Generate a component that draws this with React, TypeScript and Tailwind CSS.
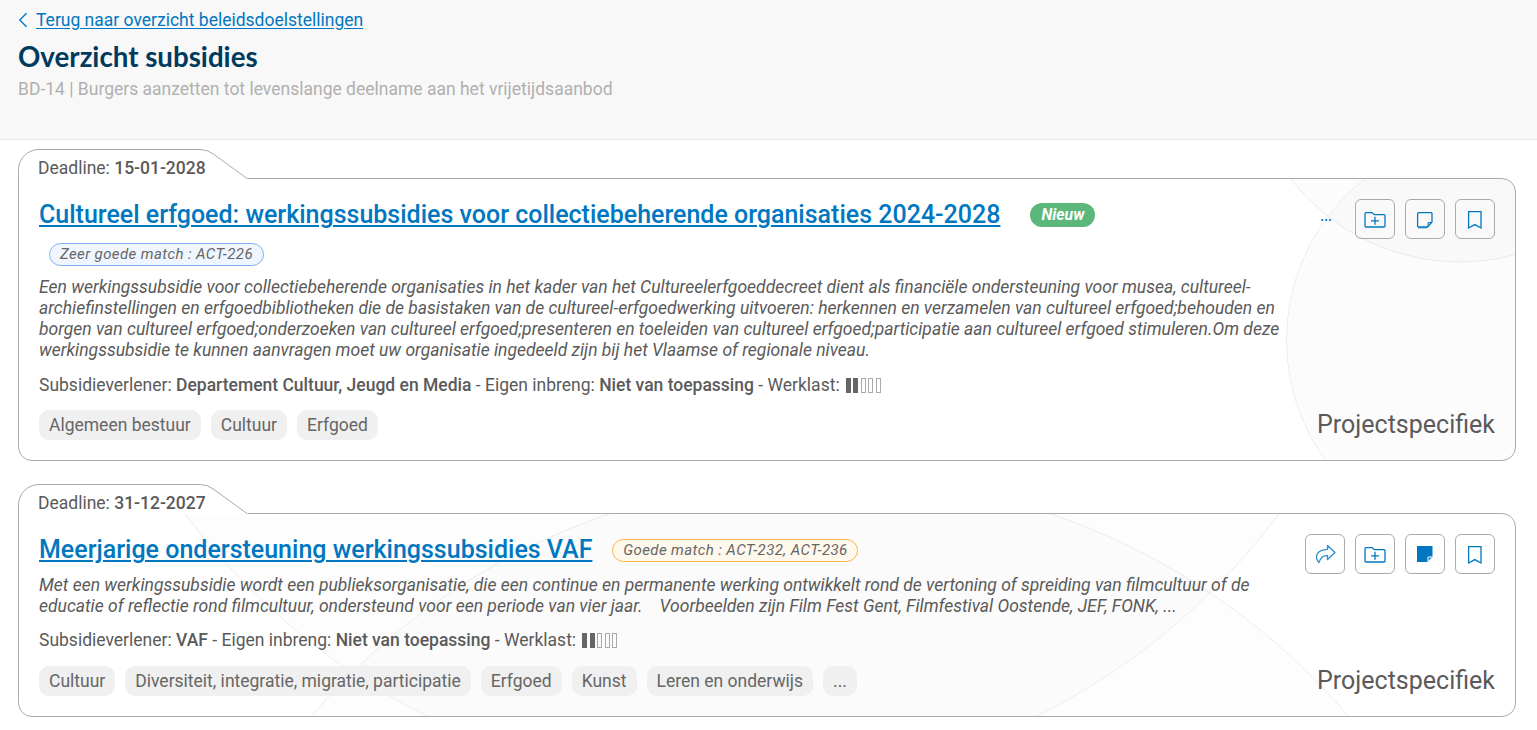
import type { ReactNode } from 'react'
import { ChevronLeft } from 'lucide-react'

const BLUE = '#0077c0'

function FolderPlusIcon() {
  return (
    <svg width="24" height="24" viewBox="0 0 24 24" fill="none" stroke={BLUE} strokeWidth="1.3">
      <path d="M3 5.6H9.2L11.2 7.6H21a1 1 0 0 1 1 1V19a1 1 0 0 1-1 1H3a1 1 0 0 1-1-1V6.6a1 1 0 0 1 1-1z" />
      <path d="M12 9.8v8M8 13.8h8" />
    </svg>
  )
}

function NoteIcon({ filled }: { filled?: boolean }) {
  if (filled) {
    return (
      <svg width="24" height="24" viewBox="0 0 24 24">
        <path d="M4 4H19.5V15L14.5 20H4z" fill={BLUE} />
        <path d="M15 15H19.5L15 19.8z" fill={BLUE} stroke="#fff" strokeWidth="1" />
      </svg>
    )
  }
  return (
    <svg width="24" height="24" viewBox="0 0 24 24" fill="none" stroke={BLUE} strokeWidth="1.3">
      <path d="M5.6 5.6H18a1 1 0 0 1 1 1V15L14.5 20H5.6a1 1 0 0 1-1-1V6.6a1 1 0 0 1 1-1z" />
      <path d="M19 15.6H15V20" strokeWidth="1" />
      <path d="M5 21H14" opacity="0.45" />
    </svg>
  )
}

function BookmarkIcon() {
  return (
    <svg width="24" height="24" viewBox="0 0 24 24" fill="none" stroke={BLUE} strokeWidth="1.3">
      <path d="M5.6 4.6H18V21L11.8 17.6L5.6 21z" />
    </svg>
  )
}

function ShareIcon() {
  return (
    <svg width="24" height="24" viewBox="0 0 24 24" fill="none" stroke="#2b8fd0" strokeWidth="1.3" strokeLinejoin="round">
      <path d="M14.5 3.5L22 10.5L14.5 17.5V13.6C10.5 13.2 7.6 15.4 6 20.5C2.2 16.5 1.5 8 14.5 7.4z" />
    </svg>
  )
}

function IconButton({ children }: { children: ReactNode }) {
  return (
    <button className="flex h-10 w-10 items-center justify-center rounded-md border border-[#aaaaaa] bg-transparent">
      {children}
    </button>
  )
}

function Tab({ date }: { date: string }) {
  return (
    <div className="relative z-10 -mb-px flex h-[30px] w-[230px] items-center pt-[9px] pl-5 text-[17.5px] text-[#5a5a5a]">
      <svg className="absolute top-0 left-0" width="230" height="30" fill="none">
        <path d="M0 30V21A21 21 0 0 1 21 0H182Q190 0 196 5L230 30z" fill="#ffffff" />
        <path d="M0.5 30V21A20.5 20.5 0 0 1 21 0.5H182Q190 0.5 196 5.5L229 29.5" stroke="#aaaaaa" />
      </svg>
      <span className="relative">
        Deadline: <span className="font-medium">{date}</span>
      </span>
    </div>
  )
}

function Workload() {
  return (
    <span className="ml-[6px] inline-flex gap-[2.5px] align-[-2px]">
      <span className="h-[15px] w-[5px] border border-[#666666] bg-[#666666]" />
      <span className="h-[15px] w-[5px] border border-[#666666] bg-[#666666]" />
      <span className="h-[15px] w-[5px] border border-[#aaaaaa]" />
      <span className="h-[15px] w-[5px] border border-[#aaaaaa]" />
      <span className="h-[15px] w-[5px] border border-[#aaaaaa]" />
    </span>
  )
}

function Meta({ provider, className }: { provider: string; className: string }) {
  return (
    <p className={`h-6 text-[17.5px] leading-6 text-[#5a5a5a] ${className}`}>
      Subsidieverlener: <span className="font-medium">{provider}</span> - Eigen inbreng:{' '}
      <span className="font-medium">Niet van toepassing</span> - Werklast:
      <Workload />
    </p>
  )
}

function Tags({ items, className }: { items: string[]; className: string }) {
  return (
    <div className={`flex gap-[10px] ${className}`}>
      {items.map(item => (
        <span key={item} className="flex h-[30px] items-center rounded-[10px] bg-[#f0f0f0] px-[10px] text-[17.5px] text-[#666666]">
          {item}
        </span>
      ))}
    </div>
  )
}

function CardTitle({ children }: { children: ReactNode }) {
  return (
    <a className="text-[25px] leading-8 font-medium text-[#0077c0] underline decoration-2 underline-offset-2">
      {children}
    </a>
  )
}

function Project() {
  return <div className="text-[25px] leading-[30px] text-[#5a5a5a]">Projectspecifiek</div>
}

export default function App() {
  return (
    <div className="min-h-[730px] bg-white font-[Roboto,sans-serif]">
      <header className="h-[140px] border-b border-[#e8e8e8] bg-[#f8f8f8] px-[18px] pt-[8px]">
        <a className="flex h-6 items-center text-[17.5px] text-[#0077c0] underline underline-offset-2">
          <ChevronLeft className="-ml-[8px] h-[26px] w-[26px]" strokeWidth={1.2} />
          Terug naar overzicht beleidsdoelstellingen
        </a>
        <h1 className="mt-[5px] font-[Lato,sans-serif] text-[27.7px] leading-10 font-bold text-[#003a5d]">Overzicht subsidies</h1>
        <p className="text-[17.5px] leading-6 text-[#b0b0b0]">
          BD-14 | Burgers aanzetten tot levenslange deelname aan het vrijetijdsaanbod
        </p>
      </header>

      <main className="pt-[9px] pr-[21px] pl-[18px]">
        <section>
          <Tab date="15-01-2028" />
          <div className="relative overflow-hidden rounded-[14px] rounded-tl-none border border-[#aaaaaa]">
            <svg className="absolute inset-0 h-full w-full" fill="#000000" fillOpacity="0.01" stroke="#ececec">
              <circle cx="1441" cy="-131" r="214" />
              <circle cx="1472.5" cy="161" r="205" />
            </svg>
            <div className="relative flex justify-between px-5 pt-5 pb-5">
              <div className="w-[1245px]">
                <div className="flex items-center">
                  <CardTitle>Cultureel erfgoed: werkingssubsidies voor collectiebeherende organisaties 2024-2028</CardTitle>
                  <span className="ml-[30px] flex h-6 w-[65px] items-center justify-center rounded-full bg-[#5bb87a] text-[15.75px] font-bold text-white italic">
                    Nieuw
                  </span>
                </div>
                <span className="mt-3 ml-[10px] flex h-[23px] w-[215px] items-center justify-center rounded-full border border-[#7db0f2] bg-[#f0f6ff] text-[15px] tracking-[0.4px] text-[#666666] italic">
                  Zeer goede match : ACT-226
                </span>
                <p className="mt-[11px] text-[17.5px] leading-[21px] text-[#5a5a5a] italic">
                  Een werkingssubsidie voor collectiebeherende organisaties in het kader van het Cultureelerfgoeddecreet dient als financiële ondersteuning voor musea, cultureel-archiefinstellingen en erfgoedbibliotheken die de basistaken van de cultureel-erfgoedwerking uitvoeren: herkennen en verzamelen van cultureel erfgoed;behouden en borgen van cultureel erfgoed;onderzoeken van cultureel erfgoed;presenteren en toeleiden van cultureel erfgoed;participatie aan cultureel erfgoed stimuleren.Om deze werkingssubsidie te kunnen aanvragen moet uw organisatie ingedeeld zijn bij het Vlaamse of regionale niveau.
                </p>
                <Meta provider="Departement Cultuur, Jeugd en Media" className="mt-3" />
                <Tags items={['Algemeen bestuur', 'Cultuur', 'Erfgoed']} className="mt-[13px]" />
              </div>
              <div className="flex flex-col items-end justify-between">
                <div className="flex items-center gap-[10px]">
                  <span className="mr-[13px] -translate-y-[3px] text-sm leading-none font-medium text-[#0077c0]">...</span>
                  <IconButton><FolderPlusIcon /></IconButton>
                  <IconButton><NoteIcon /></IconButton>
                  <IconButton><BookmarkIcon /></IconButton>
                </div>
                <Project />
              </div>
            </div>
          </div>
        </section>

        <section className="mt-[23px]">
          <Tab date="31-12-2027" />
          <div className="relative overflow-hidden rounded-[14px] rounded-tl-none border border-[#aaaaaa]">
            <svg className="absolute inset-0 h-full w-full" fill="#000000" fillOpacity="0.009" stroke="#ececec">
              <circle cx="811" cy="645" r="682" />
              <circle cx="713" cy="-409" r="683" />
            </svg>
            <div className="relative flex justify-between px-5 pt-5 pb-5">
              <div className="w-[1245px]">
                <div className="flex items-center">
                  <CardTitle>Meerjarige ondersteuning werkingssubsidies VAF</CardTitle>
                  <span className="ml-5 flex h-[23px] w-[246px] items-center justify-center rounded-full border border-[#f7b54d] bg-[#fff8ec] text-[15px] tracking-[0.4px] text-[#666666] italic">
                    Goede match : ACT-232, ACT-236
                  </span>
                </div>
                <p className="mt-[9px] text-[17.5px] leading-[21px] text-[#5a5a5a] italic">
                  Met een werkingssubsidie wordt een publieksorganisatie, die een continue en permanente werking ontwikkelt rond de vertoning of spreiding van filmcultuur of de educatie of reflectie rond filmcultuur, ondersteund voor een periode van vier jaar.&nbsp;&nbsp;&nbsp; Voorbeelden zijn Film Fest Gent, Filmfestival Oostende, JEF, FONK, ...
                </p>
                <Meta provider="VAF" className="mt-[11px]" />
                <Tags items={['Cultuur', 'Diversiteit, integratie, migratie, participatie', 'Erfgoed', 'Kunst', 'Leren en onderwijs', '...']} className="mt-[14px]" />
              </div>
              <div className="flex flex-col items-end justify-between">
                <div className="flex items-center gap-[10px]">
                  <IconButton><ShareIcon /></IconButton>
                  <IconButton><FolderPlusIcon /></IconButton>
                  <IconButton><NoteIcon filled /></IconButton>
                  <IconButton><BookmarkIcon /></IconButton>
                </div>
                <Project />
              </div>
            </div>
          </div>
        </section>
      </main>
    </div>
  )
}
